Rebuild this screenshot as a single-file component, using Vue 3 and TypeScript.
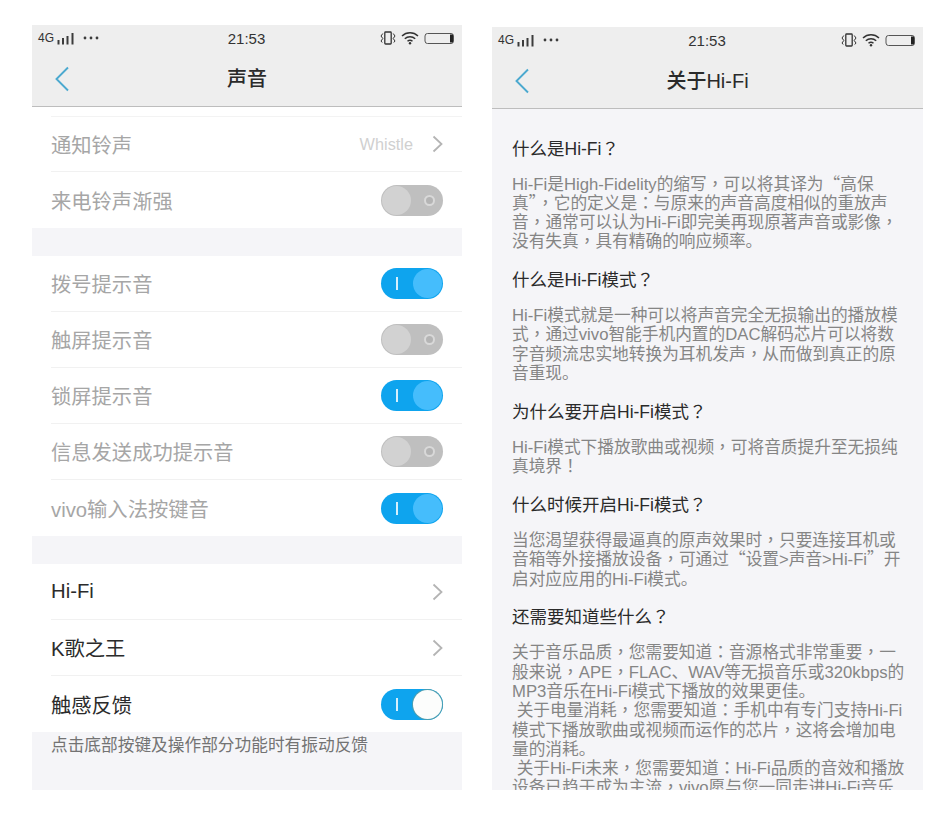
<script setup lang="ts">
interface Row {
  label: string
  dim?: boolean
  value?: string
  chevron?: boolean
  toggle?: 'on' | 'off' | 'bright'
}

const groupOne: Row[] = [
  { label: '通知铃声', dim: true, value: 'Whistle', chevron: true },
  { label: '来电铃声渐强', dim: true, toggle: 'off' }
]
const groupTwo: Row[] = [
  { label: '拨号提示音', dim: true, toggle: 'on' },
  { label: '触屏提示音', dim: true, toggle: 'off' },
  { label: '锁屏提示音', dim: true, toggle: 'on' },
  { label: '信息发送成功提示音', dim: true, toggle: 'off' },
  { label: 'vivo输入法按键音', dim: true, toggle: 'on' }
]
const groupThree: Row[] = [
  { label: 'Hi-Fi', chevron: true },
  { label: 'K歌之王', chevron: true },
  { label: '触感反馈', toggle: 'bright' }
]
const groups = [groupOne, groupTwo, groupThree]

const sections: { title: string; lines: string[] }[] = [
  {
    title: '什么是Hi-Fi？',
    lines: [
      'Hi-Fi是High-Fidelity的缩写，可以将其译为“高保',
      '真”，它的定义是：与原来的声音高度相似的重放声',
      '音，通常可以认为Hi-Fi即完美再现原著声音或影像，',
      '没有失真，具有精确的响应频率。'
    ]
  },
  {
    title: '什么是Hi-Fi模式？',
    lines: [
      'Hi-Fi模式就是一种可以将声音完全无损输出的播放模',
      '式，通过vivo智能手机内置的DAC解码芯片可以将数',
      '字音频流忠实地转换为耳机发声，从而做到真正的原',
      '音重现。'
    ]
  },
  {
    title: '为什么要开启Hi-Fi模式？',
    lines: ['Hi-Fi模式下播放歌曲或视频，可将音质提升至无损纯', '真境界！']
  },
  {
    title: '什么时候开启Hi-Fi模式？',
    lines: [
      '当您渴望获得最逼真的原声效果时，只要连接耳机或',
      '音箱等外接播放设备，可通过“设置>声音>Hi-Fi”开',
      '启对应应用的Hi-Fi模式。'
    ]
  },
  {
    title: '还需要知道些什么？',
    lines: [
      '关于音乐品质，您需要知道：音源格式非常重要，一',
      '般来说，APE，FLAC、WAV等无损音乐或320kbps的',
      'MP3音乐在Hi-Fi模式下播放的效果更佳。',
      ' 关于电量消耗，您需要知道：手机中有专门支持Hi-Fi',
      '模式下播放歌曲或视频而运作的芯片，这将会增加电',
      '量的消耗。',
      ' 关于Hi-Fi未来，您需要知道：Hi-Fi品质的音效和播放',
      '设备已趋于成为主流，vivo愿与您一同走进Hi-Fi音乐'
    ]
  }
]

const phones = [
  { title: '声音', kind: 'settings' },
  { title: '关于Hi-Fi', kind: 'about' }
]

// Full-width punctuation sits centred in its cell, so it gets its own font face.
function segments(text: string): { text: string; punct: boolean }[] {
  return text
    .split(/([，：“”？！])/)
    .filter((part) => part.length > 0)
    .map((part) => ({ text: part, punct: /^[，：“”？！]$/.test(part) }))
}
</script>

<template>
  <div class="page">
    <section v-for="phone in phones" :key="phone.kind" class="phone" :class="phone.kind">
      <header class="head">
        <div class="status">
          <div class="status-left">
            <span class="net">4G</span>
            <svg width="18" height="13" viewBox="0 0 18 13" class="signal">
              <path d="M1.500 8v4.500M6 6v6.500M10.500 4v8.500M15.500 1v11.500" stroke="#3c3c3c" stroke-width="2" fill="none" />
            </svg>
            <svg width="16" height="4" viewBox="0 0 16 4" class="dots">
              <circle cx="2" cy="2" r="1.400" fill="#3c3c3c" />
              <circle cx="8" cy="2" r="1.400" fill="#3c3c3c" />
              <circle cx="14" cy="2" r="1.400" fill="#3c3c3c" />
            </svg>
          </div>
          <span class="time">21:53</span>
          <div class="status-right">
            <svg width="16" height="14" viewBox="0 0 16 14" fill="none" stroke="#333" stroke-width="1.300">
              <rect x="4.800" y="1" width="6.400" height="12" rx="0.800" />
              <path d="M2.800 2.500 1 5l1.800 2.500L1 10l1.200 1.500M13.200 2.500 15 5l-1.800 2.500L15 10l-1.200 1.500" stroke-width="1" />
            </svg>
            <svg width="18" height="14" viewBox="0 0 18 14" fill="none" stroke="#333" stroke-width="1.500">
              <path d="M1 5c4.500-4.200 11.500-4.200 16 0M3.800 7.800c2.900-2.700 7.500-2.700 10.400 0M6.500 10.300c1.400-1.200 3.600-1.200 5 0" />
              <circle cx="9" cy="12.300" r="1.200" fill="#333" stroke="none" />
            </svg>
            <svg width="31" height="13" viewBox="0 0 31 13" fill="none">
              <rect x="1" y="1.500" width="28.500" height="10" rx="2.500" stroke="#555" stroke-width="1" />
              <rect x="26" y="2.500" width="3" height="8" fill="#222" />
            </svg>
          </div>
        </div>
        <div class="nav">
          <svg class="back" width="16" height="26" viewBox="0 0 16 26" fill="none">
            <path d="M14 1.500 2.500 13 14 24.500" stroke="#4ba9cf" stroke-width="1.900" />
          </svg>
          <h1 class="title">{{ phone.title }}</h1>
        </div>
      </header>

      <div v-if="phone.kind === 'settings'" class="settings-body">
        <div v-for="(group, g) in groups" :key="g" class="group">
          <div v-for="row in group" :key="row.label" class="row">
            <span class="label" :class="{ dim: row.dim }">{{ row.label }}</span>
            <span v-if="row.value" class="value">{{ row.value }}</span>
            <svg v-if="row.chevron" class="chev" width="11" height="18" viewBox="0 0 11 18" fill="none">
              <path d="M1.500 1.500 9.500 9l-8 7.500" stroke="#b4b4b4" stroke-width="1.800" />
            </svg>
            <span v-if="row.toggle" class="toggle" :class="row.toggle">
              <i class="mark"></i>
              <i class="knob"></i>
            </span>
          </div>
        </div>
        <p class="foot">点击底部按键及操作部分功能时有振动反馈</p>
      </div>

      <div v-else class="about-body">
        <article v-for="s in sections" :key="s.title" class="block">
          <h2><template v-for="(seg, i) in segments(s.title)" :key="i"><span v-if="seg.punct" class="punct">{{ seg.text }}</span><template v-else>{{ seg.text }}</template></template></h2>
          <p v-for="line in s.lines" :key="line"><template v-for="(seg, i) in segments(line)" :key="i"><span v-if="seg.punct" class="punct">{{ seg.text }}</span><template v-else>{{ seg.text }}</template></template></p>
        </article>
      </div>
    </section>
  </div>
</template>

<style scoped>
.page {
  width: 950px;
  height: 818px;
  box-sizing: border-box;
  padding: 25px 0 0 32px;
  display: flex;
  align-items: flex-start;
  gap: 30px;
  background: #fff;
  overflow: hidden;
  font-family: "Liberation Sans", "Noto Sans CJK SC", sans-serif;
}
.phone {
  width: 430px;
  height: 765px;
  display: flex;
  flex-direction: column;
  overflow: hidden;
  background: #fff;
}
.phone.about {
  width: 431px;
  height: 763px;
  margin-top: 2px;
  background: #f5f5f8;
}
.head {
  height: 82px;
  flex: none;
  box-sizing: border-box;
  background: #eeeeee;
  border-bottom: 1px solid #bdbdbd;
  display: flex;
  flex-direction: column;
}
.status {
  height: 26px;
  display: grid;
  grid-template-columns: 1fr auto 1fr;
  align-items: center;
  padding: 0 7px 0 6px;
}
.status-left,
.status-right {
  display: flex;
  align-items: center;
}
.status-right {
  justify-content: flex-end;
  gap: 5px;
}
.net {
  font-size: 12px;
  color: #333;
}
.signal {
  margin-left: 3px;
}
.dots {
  margin-left: 8px;
}
.time {
  font-size: 15px;
  color: #333;
}
.nav {
  flex: 1;
  display: flex;
  align-items: center;
  justify-content: center;
  position: relative;
  padding-bottom: 3px;
}
.back {
  position: absolute;
  left: 22px;
  top: 15px;
}
.title {
  margin: 0;
  font-size: 20px;
  font-weight: 500;
  color: #2a2a2a;
}
.settings-body {
  flex: 1;
  display: flex;
  flex-direction: column;
  min-height: 0;
  background: #f5f5f8;
}
.group {
  background: #fff;
  margin-bottom: 28px;
}
.group:first-child {
  padding-top: 9px;
}
.group:first-child .row:first-child {
  border-top: 1px solid #f3f3f3;
}
.group:nth-last-child(2) {
  margin-bottom: 0;
}
.row {
  height: 56px;
  box-sizing: border-box;
  margin-left: 19px;
  padding-right: 19px;
  display: flex;
  align-items: center;
  border-bottom: 1px solid #f1f1f1;
}
.row:last-child {
  border-bottom: 0;
}
.label {
  font-size: 20.300px;
  color: #2b2b2b;
  flex: 1;
  white-space: nowrap;
  padding-bottom: 1px;
}
.label.dim {
  color: #a6a6a6;
}
.value {
  font-size: 16.300px;
  color: #d0d0d0;
  margin-right: 19px;
}
.toggle {
  position: relative;
  width: 62px;
  height: 31px;
  border-radius: 16px;
  flex: none;
}
.toggle.off {
  background: #bfbfbf;
}
.toggle.on,
.toggle.bright {
  background: #0ea4ee;
}
.knob {
  position: absolute;
  top: 1px;
  width: 29px;
  height: 29px;
  border-radius: 50%;
}
.off .knob {
  left: 1px;
  background: #d2d2d2;
}
.on .knob {
  right: 1px;
  background: #45bdfc;
}
.bright .knob {
  right: 1px;
  background: #fcfdfc;
  box-shadow: 0 0 0 1px #4d9eaf;
}
.mark {
  position: absolute;
}
.off .mark {
  right: 8px;
  top: 10px;
  width: 7px;
  height: 7px;
  box-sizing: content-box;
  border: 2px solid #d9d9d9;
  border-radius: 50%;
  background: #b4b4b4;
}
.on .mark,
.bright .mark {
  left: 15px;
  top: 9px;
  width: 1.500px;
  height: 13px;
  background: #d5f0fd;
}
.foot {
  flex: 1;
  margin: 0;
  padding: 4px 0 0 19px;
  font-size: 16.700px;
  line-height: 20px;
  color: #737373;
  background: #f5f5f8;
  white-space: nowrap;
}
.about-body {
  flex: 1;
  min-height: 0;
  overflow: hidden;
  box-sizing: border-box;
  padding: 27.500px 0 0 20px;
}
.block {
  margin-bottom: 16.500px;
}
.block h2 {
  margin: 0 0 14px;
  font-size: 17.500px;
  line-height: 24px;
  font-weight: 400;
  color: #2a2a2a;
  white-space: nowrap;
}
.block p {
  margin: 0;
  font-size: 16.700px;
  line-height: 19.300px;
  color: #858585;
  white-space: pre;
}
.punct {
  font-family: "Noto Sans CJK TC", sans-serif;
  line-height: 0;
}
</style>
